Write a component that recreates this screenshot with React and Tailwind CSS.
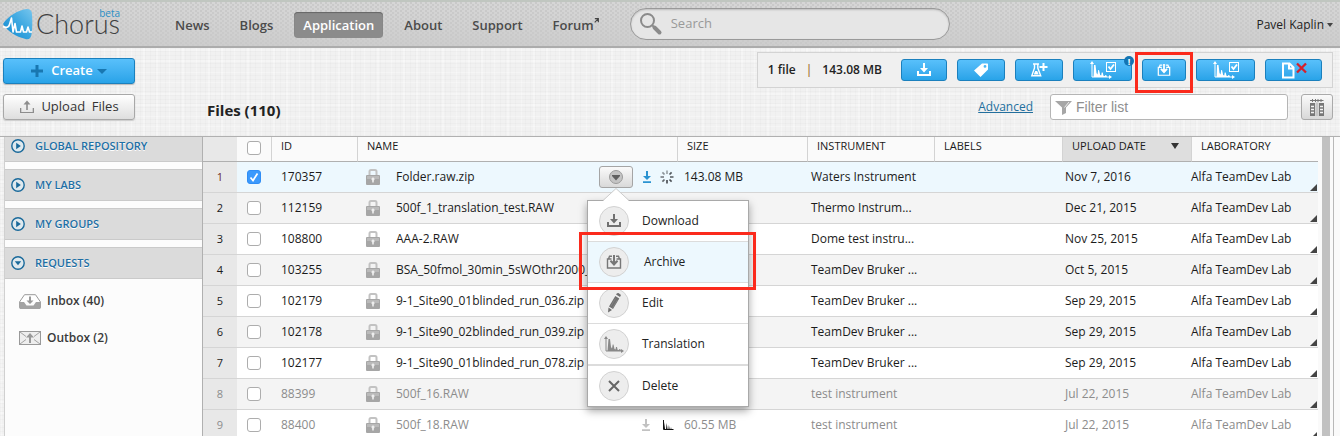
import React from "react";

const DownloadIcon = ({ className }) => (
  <svg viewBox="0 0 16 16" className={className} fill="currentColor" aria-hidden="true">
    <path d="M7 1h2v5h3L8 10.500 4 6h3z" />
    <path d="M1 9h2v3h10V9h2v5H1z" />
  </svg>
);

const ArchiveIcon = ({ className }) => (
  <svg viewBox="0 0 16 16" className={className} aria-hidden="true">
    <path
      d="M6 2.300H3.500L2.500 5M10 2.300h2.500l1 2.700M5.500 5h-4v9h13V5h-4"
      fill="none"
      stroke="currentColor"
      strokeWidth="1.400"
    />
    <path d="M7 1h2v6.500l2-1.500 1.200 1.500L8 12 3.800 7.500 5 6l2 1.500z" fill="currentColor" />
  </svg>
);

const UploadIcon = ({ className }) => (
  <svg viewBox="0 0 16 14" className={className} fill="currentColor" aria-hidden="true">
    <path d="M7.200 10V4.500H4.500L8 .5l3.500 4H8.800V10z" />
    <path d="M1 8h1.300v4h11.400V8H15v5H1z" />
  </svg>
);

const TagIcon = () => (
  <svg viewBox="0 0 16 16" className="size-4" aria-hidden="true">
    <path
      fillRule="evenodd"
      fill="currentColor"
      d="M9 1.500h5.500l.5.500v5.500L7.500 15 1 8.500zM12 3a1.400 1.400 0 1 0 0 2.800A1.400 1.400 0 0 0 12 3z"
    />
  </svg>
);

const FlaskIcon = () => (
  <svg viewBox="0 0 18 16" className="h-4 w-[18px]" aria-hidden="true">
    <path d="M3 2h6M4.500 2v4L1.800 13.800h8.900L7.800 6V2" fill="none" stroke="currentColor" strokeWidth="1.400" />
    <path d="M5.200 9h2l1.500 3.500H3.800z" fill="currentColor" />
    <path d="M12.500 1h2v3h3v2h-3v3h-2V6h-3V4h3z" fill="currentColor" />
  </svg>
);

const SpectrumIcon = ({ className }) => (
  <svg viewBox="0 0 20 17" className={className} aria-hidden="true">
    <path d="M2 2v13h16" fill="none" stroke="currentColor" strokeWidth="1" />
    <path d="M2 0 0 3h4zM20 15l-3-2v4z" fill="currentColor" />
    <path d="M3.500 15 4.500 3h1.500L7 11l1 1.500.7-4h.8l1 4.500 1 .5.500-2.500h1l.6 2.700 1.400.3.400-1h.8l.8 2z" fill="currentColor" />
  </svg>
);

const SpectrumCheckIcon = () => (
  <svg viewBox="0 0 28 18" className="h-[18px] w-7" aria-hidden="true">
    <path d="M3 2v14h18" fill="none" stroke="currentColor" />
    <path d="M3 0 1 3h4zM23 16l-3-2v4z" fill="currentColor" />
    <path d="M4.500 16 5 4h1.500l1 8 1 1.500.700-4.500h.8l1.200 5 1 .5.500-3h1l.8 3.200 1.500.3.400-1h.800l.8 2z" fill="currentColor" />
    <rect x="17.500" y="1.500" width="9" height="9" fill="none" stroke="currentColor" />
    <path d="m19.500 5.500 2 2.500 3.500-4.500" fill="none" stroke="currentColor" strokeWidth="1.800" />
  </svg>
);

const FileDeleteIcon = () => (
  <svg viewBox="0 0 26 17" className="h-[17px] w-[26px]" aria-hidden="true">
    <path d="M2 1.500h6.500l4 4V15.500H2zM8 2v4.500h4.500" fill="none" stroke="#fff" strokeWidth="2" />
    <path d="m16 1.500 9 9M25 1.500l-9 9" stroke="#d5202c" strokeWidth="2.300" />
  </svg>
);

const LockIcon = () => (
  <svg viewBox="0 0 14 17" className="h-[17px] w-3.5 shrink-0" aria-hidden="true">
    <path d="M3.500 7V2.500Q3.500 1 5 1h4q1.500 0 1.500 1.500V7" fill="none" stroke="#c2c2c2" strokeWidth="2" />
    <rect y="6" width="14" height="10" rx="1" fill="#a6a6a6" />
    <rect x="1" y="7" width="12" height="3" fill="#bababa" />
    <path d="M7 8.500a1.700 1.700 0 0 0-.8 3.100v1.900h1.600v-1.900A1.700 1.700 0 0 0 7 8.500z" fill="#eee" />
  </svg>
);

const ReadyIcon = ({ className }) => (
  <svg viewBox="0 0 10 12" className={className} fill="currentColor" aria-hidden="true">
    <path d="M4 0h2v5h3L5 9 1 5h3zM1 10.200h8V12H1z" />
  </svg>
);

const SpinnerIcon = () => (
  <svg viewBox="0 0 14 14" className="size-3.5" stroke="#4a4f54" strokeWidth="1.700" aria-hidden="true">
    <path d="M7 0.500v3.500" strokeOpacity=".5" />
    <path d="M11.600 2.400 9.500 4.500M13.500 7H10" strokeOpacity=".95" />
    <path d="M11.600 11.600 9.500 9.500" />
    <path d="M7 13.500V10" />
    <path d="M2.400 11.600l2.100-2.100" strokeOpacity=".85" />
    <path d="M.5 7H4" strokeOpacity=".7" />
    <path d="M2.400 2.400l2.100 2.100" strokeOpacity=".6" />
  </svg>
);

const MiniSpectrumIcon = () => (
  <svg viewBox="0 0 12 12" className="size-3" aria-hidden="true">
    <path d="M1.500 1v9.500h10" fill="none" stroke="#111" />
    <path d="M2 11 2.200 3l.9 7 .9.500.7-6.500.9 6.500h.8l.5-4.500.8 4.500h.8l.5-2.500.6 3z" fill="#111" />
  </svg>
);

const PencilIcon = () => (
  <svg viewBox="0 0 16 20" className="h-5 w-4" aria-hidden="true">
    <path d="M10 1.500 14 4l1-2L12.500 0 11 .3zM9.300 3l4 2.500L7 16l-4-2.500zM2.500 14.500 6 17l-4 2.500z" fill="#707070" />
    <path d="M9.500 5.500 4.800 13.300M11.500 6.800 6.500 14.800" stroke="#8f8f8f" strokeWidth=".6" />
  </svg>
);

const InboxIcon = () => (
  <svg viewBox="0 0 22 15" className="h-[15px] w-[22px]" aria-hidden="true">
    <path d="M.5 8 5.500.7h11l5 7.300" fill="#fff" stroke="#999" />
    <path d="M0 8h5l2.500 3.500h7L17 8h5v5.500L21 15H1l-1-1.500z" fill="#a3a3a3" />
    <path d="M10 2.500h2v4h2.500L11 10 7.500 6.500H10z" fill="#999" />
  </svg>
);

const OutboxIcon = () => (
  <svg viewBox="0 0 22 14" className="h-3.5 w-[22px]" aria-hidden="true">
    <rect x=".5" y=".5" width="21" height="13" fill="#eee" stroke="#999" />
    <path d="m1 1 6 4.500M21 1l-6 4.500M1 13l6-4.500M21 13l-6-4.500" stroke="#a3a3a3" />
    <path d="M10 12V6.500H7L11 2l4 4.500h-3V12z" fill="#999" />
  </svg>
);

const CircleArrow = ({ open }) => (
  <svg viewBox="0 0 14 14" className="size-3.5" aria-hidden="true">
    <circle cx="7" cy="7" r="6.200" fill="#dfe9ee" stroke="#19699a" strokeWidth="1.400" />
    <path d={open ? "M3.800 5.200h6.400L7 9.200z" : "M5.200 3.800v6.400L9.800 7z"} fill="#19699a" />
  </svg>
);

const Logo = () => (
  <svg viewBox="0 0 30 31" className="h-[31px] w-[30px]" aria-hidden="true">
    <defs>
      <linearGradient id="logo" x1="0" y1="1" x2="1" y2="0">
        <stop offset="0" stopColor="#0b86cf" />
        <stop offset=".6" stopColor="#43abe2" />
        <stop offset="1" stopColor="#78c6ee" />
      </linearGradient>
    </defs>
    <path d="M0 15C5 7 15 1 24 0q5 0 5 5.500c.5 7 .5 13-.5 20-.7 4-2.500 5.500-6 4.500C14 28 5 23 0 15z" fill="url(#logo)" />
    <path
      d="M0 17.500c3 1.500 6 1 6.500-2L8.500 9l1.500 14L12 14.500l1.500 8.500h4l1.500-6 1.500 6h3l1.500-5 1.500 5h2.500"
      fill="none"
      stroke="#fff"
      strokeWidth="1.600"
      strokeLinejoin="round"
    />
  </svg>
);

const Highlight = ({ className }) => (
  <span className={`pointer-events-none absolute z-30 border-3 border-[#fb2a1c] ${className}`} />
);

function Checkbox({ label, checked }) {
  return (
    <label className="inline-grid size-3.5 align-top">
      <input
        type="checkbox"
        aria-label={label}
        defaultChecked={checked}
        className="peer col-start-1 row-start-1 size-3.5 appearance-none rounded-[3px] border border-[#adadad] bg-white checked:border-[#2f8df5] checked:bg-[#3b99fc]"
      />
      <svg viewBox="0 0 14 14" className="invisible col-start-1 row-start-1 size-3.5 peer-checked:visible" aria-hidden="true">
        <path d="m3.500 7.500 2.500 3 4.500-7" fill="none" stroke="#fff" strokeWidth="1.700" />
      </svg>
    </label>
  );
}

const nav = ["News", "Blogs", "Application", "About", "Support", "Forum"];

const actions = [
  { label: "Download", width: "w-[46px]", icon: <DownloadIcon className="size-4" /> },
  { label: "Labels", width: "w-12", icon: <TagIcon /> },
  { label: "New experiment", width: "w-12", icon: <FlaskIcon /> },
  { label: "Translate", width: "w-[59px]", icon: <SpectrumCheckIcon />, badge: true },
  { label: "Archive", width: "w-11", icon: <ArchiveIcon className="size-3.5" />, marked: true },
  { label: "Translation", width: "w-[59px]", icon: <SpectrumCheckIcon /> },
  { label: "Delete files", width: "w-[57px]", icon: <FileDeleteIcon /> },
];

const sections = [
  { title: "GLOBAL REPOSITORY" },
  { title: "MY LABS" },
  { title: "MY GROUPS" },
  { title: "REQUESTS", open: true },
];

const files = [
  { id: "170357", name: "Folder.raw.zip", size: "143.08 MB", instrument: "Waters Instrument", date: "Nov 7, 2016", active: true },
  { id: "112159", name: "500f_1_translation_test.RAW", instrument: "Thermo Instrum...", date: "Dec 21, 2015" },
  { id: "108800", name: "AAA-2.RAW", instrument: "Dome test instru...", date: "Nov 25, 2015" },
  { id: "103255", name: "BSA_50fmol_30min_5sWOthr2000_", instrument: "TeamDev Bruker ...", date: "Oct 5, 2015" },
  { id: "102179", name: "9-1_Site90_01blinded_run_036.zip", instrument: "TeamDev Bruker ...", date: "Sep 29, 2015" },
  { id: "102178", name: "9-1_Site90_02blinded_run_039.zip", instrument: "TeamDev Bruker ...", date: "Sep 29, 2015" },
  { id: "102177", name: "9-1_Site90_01blinded_run_078.zip", instrument: "TeamDev Bruker ...", date: "Sep 29, 2015" },
  { id: "88399", name: "500f_16.RAW", instrument: "test instrument", date: "Jul 22, 2015", muted: true },
  { id: "88400", name: "500f_18.RAW", size: "60.55 MB", instrument: "test instrument", date: "Jul 22, 2015", muted: true, ready: true },
];

const menu = [
  { label: "Download", icon: <DownloadIcon className="size-4 text-[#707070]" />, line: "border-b" },
  { label: "Archive", icon: <ArchiveIcon className="size-4 text-[#777]" />, line: "border-b", marked: true },
  { label: "Edit", icon: <PencilIcon />, line: "border-b" },
  { label: "Translation", icon: <SpectrumIcon className="h-[17px] w-5 text-[#888]" />, line: "border-b-2" },
  {
    label: "Delete",
    line: "",
    icon: (
      <svg viewBox="0 0 12 12" className="size-3" aria-hidden="true">
        <path d="m1 1 10 10M11 1 1 11" stroke="#666" strokeWidth="2" />
      </svg>
    ),
  },
];

function Header() {
  return (
    <header className="flex h-12 shrink-0 items-center border-t-2 border-b-2 border-t-[#c0c6c0] border-b-[#acacac] bg-[#d0d0d0] bg-[radial-gradient(circle_at_1px_1px,#c9c9c9_1px,transparent_1px),radial-gradient(circle_at_3px_3px,#cacaca_1px,transparent_1px),linear-gradient(#d6d6d6,#cdcdcd)] bg-size-[5px_4px,5px_4px,auto] pr-[7px] pl-[3px]">
      <a href="#home" className="flex w-[163px] shrink-0 items-center gap-[3px]">
        <Logo />
        <span className="relative font-['Lato',sans-serif] text-[27px] leading-8 font-light text-[#404040]">
          Chorus
          <span className="absolute -top-px right-0 font-['Open_Sans',sans-serif] text-[10px] leading-3 font-normal text-[#2a8fc6]">beta</span>
        </span>
      </a>
      <nav className="flex items-center gap-3 pt-0.5 text-[13px] leading-[26px] font-semibold text-[#4b4b4b]">
        {nav.map((item) =>
          item === "Application" ? (
            <a key={item} href="#application" aria-current="page" className="rounded bg-[#8b8b8b] px-[9px] text-white shadow-[inset_0_1px_1px_#666]">
              {item}
            </a>
          ) : (
            <a key={item} href={`#${item.toLowerCase()}`} className="flex px-[9px]">
              {item}
              {item === "Forum" && (
                <svg viewBox="0 0 6 6" className="mt-1.5 size-[5px]" aria-hidden="true">
                  <path d="M1 .8h4.200V5M5 1 .8 5.200" fill="none" stroke="#444" strokeWidth="1.400" />
                </svg>
              )}
            </a>
          )
        )}
      </nav>
      <label className="ml-[22px] flex h-8 w-80 items-center gap-2 rounded-full border border-[#999] bg-[#e6e6e6] pl-2 shadow-[inset_0_1px_2px_#bbb]">
        <svg viewBox="0 0 24 24" className="size-6 shrink-0" aria-hidden="true">
          <circle cx="8.500" cy="8.500" r="6.500" fill="none" stroke="#8b8b8b" strokeWidth="2" />
          <path d="m13 13 2 2" stroke="#8b8b8b" strokeWidth="2" />
          <path d="m15.500 15.500 5 5" stroke="#8b8b8b" strokeWidth="4" strokeLinecap="round" />
        </svg>
        <input type="search" aria-label="Search" placeholder="Search" className="w-full min-w-0 bg-transparent text-[13px] outline-none placeholder:text-[#999]" />
      </label>
      <button type="button" className="ml-auto flex items-center gap-[3px] pt-0.5 text-xs text-[#222]">
        Pavel Kaplin
        <span className="border-x-3 border-t-4 border-x-transparent border-t-[#444]" />
      </button>
    </header>
  );
}

function Toolbar() {
  return (
    <section className="flex h-22 shrink-0">
      <div className="flex w-[203px] shrink-0 flex-col gap-2.5 pt-2.5 pl-[3px]">
        <button type="button" className="flex h-[26px] w-[132px] items-center justify-center gap-2 rounded-[3px] border border-[#1b80bd] bg-linear-to-b from-[#58c0fb] to-[#28a3e8] text-[13px] font-semibold text-white shadow-[0_1px_1px_#bbb]">
          <svg viewBox="0 0 12 12" className="size-3" aria-hidden="true">
            <path d="M4.500 0h3v4.500H12v3H7.500V12h-3V7.500H0v-3h4.500z" fill="#1877b1" />
          </svg>
          <span className="flex items-center gap-1">
            Create
            <span className="border-x-5 border-t-5 border-x-transparent border-t-[#1877b1]" />
          </span>
        </button>
        <button type="button" className="flex h-[26px] w-[132px] items-center justify-center gap-1.5 rounded-[3px] border border-[#a8a8a8] bg-linear-to-b from-white to-[#dedede] text-[13px] text-[#333] shadow-[0_1px_1px_#ccc]">
          <UploadIcon className="h-3.5 w-4 text-[#8d8d8d]" />
          <span className="whitespace-pre">Upload  Files</span>
        </button>
      </div>
      <div className="flex min-w-0 flex-1 flex-col pt-1 pr-[7px] pl-1">
        <div className="ml-auto flex h-9 items-center border border-[#d3d3d3] bg-[#f0f0f0] px-[10px] text-xs font-semibold text-[#222]">
          <span>1 file</span>
          <span className="px-2.5 text-[#a67c3c]">|</span>
          <span>143.08 MB</span>
          <div className="ml-[19px] flex gap-2.5">
            {actions.map((a) => (
              <div key={a.label} className="relative">
                <button
                  type="button"
                  aria-label={a.label}
                  className={`flex h-[22px] items-center justify-center rounded-[3px] border border-[#1b80bd] bg-linear-to-b from-[#58c0fb] to-[#28a3e8] text-white ${a.width}`}
                >
                  {a.icon}
                </button>
                {a.badge && (
                  <span className="absolute -top-[3px] -right-0.5 flex size-[10px] items-center justify-center rounded-full bg-[#1475b3] text-[9px] leading-none font-bold text-white">!</span>
                )}
                {a.marked && <Highlight className="-inset-x-[7px] -top-[7px] h-[41px]" />}
              </div>
            ))}
          </div>
        </div>
        <div className="flex items-center pt-1.5">
          <h1 className="pt-1.5 text-[15px] leading-5 font-bold text-[#222]">Files (110)</h1>
          <a href="#advanced" className="ml-auto text-xs text-[#236f9d] underline">Advanced</a>
          <label className="ml-[17px] flex h-[26px] w-[238px] items-center gap-1 rounded-[3px] border border-[#b5b5b5] bg-white pl-1">
            <svg viewBox="0 0 17 15" className="h-[15px] w-[17px] shrink-0" aria-hidden="true">
              <path d="M0 1h17l-6 6.500V13l-4 2V7.500z" fill="#a6a6a6" />
              <path d="M14 2 9.500 7.500" stroke="#fff" strokeWidth=".8" />
            </svg>
            <input aria-label="Filter list" placeholder="Filter list" className="w-full min-w-0 font-['Liberation_Sans',sans-serif] text-sm outline-none placeholder:text-[#8f8f8f]" />
          </label>
          <button type="button" aria-label="Columns" className="ml-[13px] flex h-[26px] w-8 items-center justify-center rounded-[3px] border border-[#aaa] bg-linear-to-b from-[#fafafa] to-[#d8d8d8]">
            <svg viewBox="0 0 14 17" className="h-[17px] w-3.5" aria-hidden="true">
              <path d="M0 1.500h13.500M2.500 0v3M11 0v3M5.500 0v3M8 0v3" stroke="#777" fill="none" />
              <path d="M0 4h5v13H0zM9 4h5v13H9z" fill="#777" />
              <path d="M5.500 3.500h3V17h-3z" fill="#c4c4c4" />
              <path d="M1 7.500h3M1 10.500h3M1 13.500h3M10 7.500h3M10 10.500h3M10 13.500h3" stroke="#f2f2f2" strokeWidth="1.500" />
            </svg>
          </button>
        </div>
      </div>
    </section>
  );
}

function Sidebar() {
  return (
    <aside className="w-[198px] shrink-0 overflow-hidden border-l border-[#d0d0d0] bg-[#fcfcfc]">
      <div className="-mt-[7px] flex flex-col gap-[7px]">
        {sections.map((s) => (
          <button
            key={s.title}
            type="button"
            aria-expanded={!!s.open}
            className="flex h-8 items-center gap-2.5 border-y border-[#cacaca] bg-[#dbdbdb] pl-1.5 text-[11px] font-semibold text-[#1d6fa5] [text-shadow:0_1px_0_#fff]"
          >
            <CircleArrow open={s.open} />
            {s.title}
          </button>
        ))}
      </div>
      <div className="flex flex-col gap-[17px] pt-3 pl-3.5 text-xs leading-5 font-semibold text-[#3a3a3a]">
        <a href="#inbox" className="flex items-center gap-1.5"><InboxIcon />Inbox (40)</a>
        <a href="#outbox" className="flex items-center gap-1.5"><OutboxIcon />Outbox (2)</a>
      </div>
    </aside>
  );
}

function RowMenu() {
  return (
    <div className="absolute top-[34px] -left-3 z-20 w-[162px] border border-[#a9a9a9] bg-white shadow-[0_4px_8px_rgba(0,0,0,0.35)]">
      <svg viewBox="0 0 26 13" className="absolute -top-[13px] left-[15px] h-[13px] w-[26px]" aria-hidden="true">
        <path d="M0 13 13 .500 26 13z" fill="#fff" />
        <path d="M0 12.500 13 .500 26 12.500" fill="none" stroke="#ccc" />
      </svg>
      <ul>
        {menu.map((m) => (
          <li key={m.label} className={`relative border-[#dcdcdc] ${m.line} ${m.marked ? "bg-[#edf8fe]" : ""}`}>
            <button type="button" className={`flex h-10 w-full items-center pl-[11px] text-xs text-[#222] ${m.marked ? "gap-[15px]" : "gap-[13px]"}`}>
              <span className="flex size-[30px] items-center justify-center rounded-full border border-[#d2d2d2] bg-[#ededed]">{m.icon}</span>
              {m.label}
            </button>
            {m.marked && <Highlight className="-top-[10px] -right-2 -bottom-2 -left-[9px]" />}
          </li>
        ))}
      </ul>
    </div>
  );
}

const th = "border-l border-[#d3d3d3] pl-[9px] text-left align-top font-normal";

function FileTable() {
  return (
    <table className="w-full table-fixed border-separate border-spacing-0 text-xs text-[#1b1b1b]">
      <colgroup>
        <col className="w-[34px]" />
        <col className="w-[34px]" />
        <col className="w-[86px]" />
        <col />
        <col className="w-[130px]" />
        <col className="w-[127px]" />
        <col className="w-[128px]" />
        <col className="w-[129px]" />
        <col className="w-[127px]" />
      </colgroup>
      <thead>
        <tr className="h-[25px] bg-[#fafafa] text-[11px] leading-[18px] *:border-b *:border-b-[#b0b0b0]">
          <td className="bg-[#e8e8e8]" />
          <th className="pt-1 text-center align-top font-normal"><Checkbox label="Select all files" /></th>
          <th className={th}>ID</th>
          <th className={th}>NAME</th>
          <th className={th}>SIZE</th>
          <th className={th}>INSTRUMENT</th>
          <th className={th}>LABELS</th>
          <th className={`${th} bg-[#dedede]`} aria-sort="descending">
            <span className="flex items-center justify-between pr-3">
              UPLOAD DATE
              <span className="border-x-4 border-t-6 border-x-transparent border-t-[#333]" />
            </span>
          </th>
          <th className={th}>LABORATORY</th>
        </tr>
      </thead>
      <tbody>
        {files.map((f, i) => (
          <tr
            key={f.id}
            className={`h-[31px] *:border-b *:border-[#d5d5d5] ${f.active ? "bg-[#edf8fe]" : i % 2 ? "bg-[#f4f4f4]" : "bg-white"} ${f.muted ? "text-[#8c8c8c]" : ""}`}
          >
            <td className={`bg-[#e8e8e8] text-center text-[11px] ${f.active ? "text-[#6d2a2c]" : ""}`}>{i + 1}</td>
            <td className="text-center"><span className="flex justify-center"><Checkbox label={`Select ${f.name}`} checked={f.active} /></span></td>
            <td className="pl-[10px]">{f.id}</td>
            <td className="pl-[9px]">
              <div className="flex items-center">
                <LockIcon />
                <span className="ml-4 min-w-0 flex-1 truncate">{f.name}</span>
                {f.active && (
                  <>
                    <div className="relative shrink-0">
                      <button type="button" aria-label="File actions" aria-expanded="true" className="flex h-[22px] w-[34px] items-center justify-center rounded-[3px] border border-[#a5a5a5] bg-linear-to-b from-[#fafafa] to-[#d9d9d9]">
                        <svg viewBox="0 0 14 14" className="size-3.5" aria-hidden="true">
                          <circle cx="7" cy="7" r="6.500" fill="#c4c4c4" stroke="#9b9b9b" />
                          <path d="M3 5h8v1L7 10.500 3 6z" fill="#5f5f5f" />
                        </svg>
                      </button>
                      <RowMenu />
                    </div>
                    <span className="ml-[9px] flex shrink-0 items-center gap-2 pr-[3px]">
                      <ReadyIcon className="h-3 w-2.5 text-[#2b93d1]" />
                      <SpinnerIcon />
                    </span>
                  </>
                )}
                {f.ready && (
                  <span className="flex shrink-0 items-center gap-[11px] pr-[3px]">
                    <ReadyIcon className="h-3 w-2.5 text-[#c2c2c2]" />
                    <MiniSpectrumIcon />
                  </span>
                )}
              </div>
            </td>
            <td className="pl-[7px]">{f.size}</td>
            <td className="pl-1">{f.instrument}</td>
            <td />
            <td className="pl-[3px]">{f.date}</td>
            <td>
              <div className="flex h-[30px] items-center justify-between pr-px">
                Alfa TeamDev Lab
                <span className="mb-px self-end border-b-7 border-l-7 border-b-[#444] border-l-transparent" />
              </div>
            </td>
          </tr>
        ))}
      </tbody>
    </table>
  );
}

export default function App() {
  return (
    <div className="flex h-screen flex-col overflow-hidden bg-[#f1f1f1] bg-[repeating-linear-gradient(90deg,rgba(0,0,0,0.014)_0_1px,transparent_1px_5px),repeating-linear-gradient(0deg,rgba(0,0,0,0.014)_0_1px,transparent_1px_4px),repeating-linear-gradient(90deg,rgba(255,255,255,0.3)_0_2px,transparent_2px_13px),repeating-linear-gradient(0deg,rgba(255,255,255,0.3)_0_2px,transparent_2px_11px)] font-['Open_Sans',sans-serif]">
      <Header />
      <Toolbar />
      <main className="flex min-h-0 flex-1 border-t border-[#b0b0b0] pl-1">
        <Sidebar />
        <div className="min-w-0 flex-1 overflow-hidden border-l border-[#b0b0b0] bg-white">
          <FileTable />
        </div>
        <div className="flex w-4 shrink-0 border-r border-[#b8b8b8] bg-[#fafafa] pl-1">
          <div className="w-2 bg-[#c1c1c1]" />
        </div>
        <div className="w-1.5 shrink-0 bg-[#fafafa]" />
      </main>
    </div>
  );
}
